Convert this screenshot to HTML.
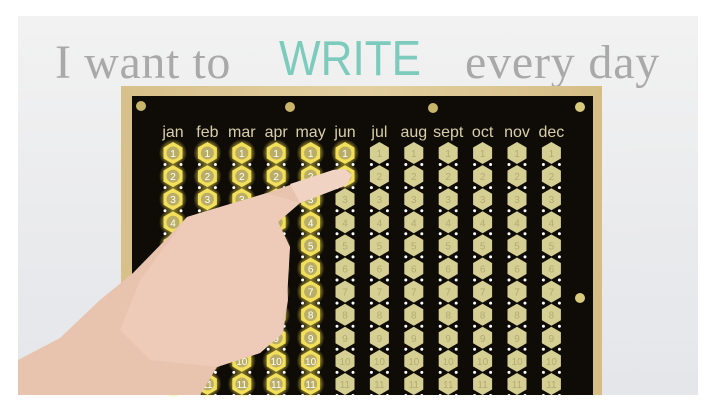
<!DOCTYPE html>
<html><head><meta charset="utf-8"><style>
html,body{margin:0;padding:0;width:716px;height:408px;overflow:hidden;background:#fff}
#bg{position:absolute;left:18px;top:16px;width:680px;height:379px;background:linear-gradient(180deg,#f2f2f2,#e9eaec 60%,#e4e6ea)}
.t{position:absolute;font-family:"Liberation Serif",serif;color:#a9a9a9;font-size:48px;top:35px;white-space:nowrap}
svg{position:absolute;left:0;top:0}
</style></head><body>
<div id="bg"></div>
<div class="t" style="left:55px;letter-spacing:0.6px">I want to</div>
<div class="t" style="left:279px;top:31px;font-family:'Liberation Sans',sans-serif;color:#7ccbbd;font-size:49px;transform:scaleX(0.9);transform-origin:left">WRITE</div>
<div class="t" style="left:465px;letter-spacing:0.8px">every day</div>
<svg id="s" width="716" height="408" xmlns="http://www.w3.org/2000/svg">
<defs>
<linearGradient id="wood" x1="0" x2="1"><stop offset="0" stop-color="#d8c08a"/><stop offset="0.5" stop-color="#e2cfa0"/><stop offset="1" stop-color="#d6bd86"/></linearGradient>
<radialGradient id="glow"><stop offset="0.4" stop-color="#f6e04a" stop-opacity="0.9"/><stop offset="1" stop-color="#f6e04a" stop-opacity="0"/></radialGradient>
</defs>
<rect x="121" y="86" width="481" height="309" fill="url(#wood)"/>
<rect x="132" y="96" width="461" height="299" fill="#0f0c08"/>
<circle cx="141" cy="106" r="5" fill="#c9b56a"/>
<circle cx="290" cy="107" r="5" fill="#c9b56a"/>
<circle cx="433" cy="108" r="5" fill="#c9b56a"/>
<circle cx="580" cy="107" r="5" fill="#d8cc7a"/>
<circle cx="580" cy="298" r="5" fill="#d8cc7a"/>
<g id="g" font-family="Liberation Sans,sans-serif"></g>
<path d="M18,360 L60,338 L100,300 L133,273 L170,235 L187,217 L220,207 L267,193 L333,170 L345,169 L352,175 L347,185 L300,203 L278,222 L290,247 L287,273 L288,300 L283,333 L260,353 L217,367 L200,395 L18,395 Z" fill="#e8c3ae"/>
<path d="M187,217 L220,207 L267,193 L300,203 L278,222 L290,247 L287,300 L283,333 L260,353 L217,367 L150,360 L120,330 L140,280 Z" fill="#edcbb8"/>
<path d="M300,203 L347,185 L352,175 L345,169 L333,170 L290,184 Z" fill="#f0d3c2"/>
</svg>
<script>
var months=["jan","feb","mar","apr","may","jun","jul","aug","sept","oct","nov","dec"];
var g=document.getElementById("g"),h="";
for(var c=0;c<12;c++){
 var x=173+c*34.4;
 h+='<text x="'+x+'" y="137" fill="#d7cfa8" font-size="16" text-anchor="middle">'+months[c]+'</text>';
 for(var r=0;r<11;r++){
  var y=153+r*23.1;
  var lit=c<5||(c==5&&r<2);
  var pts=[[0,-11],[9.5,-5.5],[9.5,5.5],[0,11],[-9.5,5.5],[-9.5,-5.5]].map(function(p){return (x+p[0])+","+(y+p[1])}).join(" ");
  if(lit)h+='<circle cx="'+x+'" cy="'+y+'" r="14" fill="url(#glow)"/>';
  h+='<polygon points="'+pts+'" fill="'+(lit?'#f3e05a':'#d6cf93')+'"/>';
  if(lit)h+='<circle cx="'+x+'" cy="'+y+'" r="6.5" fill="#b9ad68"/>';
  h+='<text x="'+x+'" y="'+(y+4)+'" fill="'+(lit?'#fff':'#b3ab70')+'" font-size="10" text-anchor="middle">'+(r+1)+'</text>';
  h+='<circle cx="'+(x-8)+'" cy="'+(y+11.5)+'" r="1.5" fill="#fff"/><circle cx="'+(x+8)+'" cy="'+(y+11.5)+'" r="1.5" fill="#fff"/>';
 }
}
g.innerHTML=h;
</script>
</body></html>
